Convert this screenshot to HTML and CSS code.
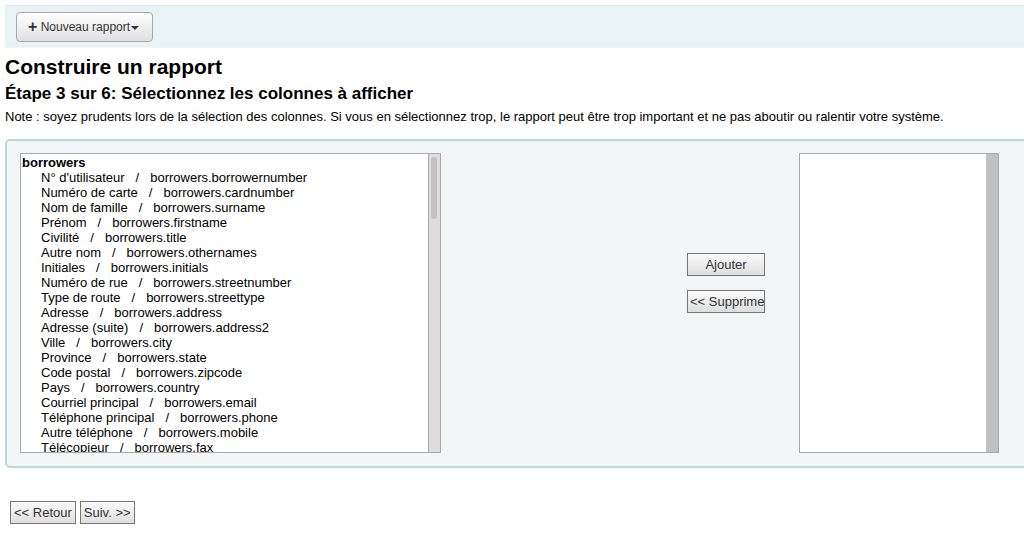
FILE: index.html
```html
<!DOCTYPE html>
<html lang="fr">
<head>
  <meta charset="UTF-8">
  <meta name="viewport" content="width=device-width, initial-scale=1.0">
  <title>Construire un rapport</title>
  <link rel="stylesheet" href="styles.css">
</head>
<body>
  <div class="page">
    <div id="toolbar">
      <button type="button" class="btn-new"><span class="plus">+</span> Nouveau rapport<span class="caret"></span></button>
    </div>

    <h1>Construire un rapport</h1>
    <h3>Étape 3 sur 6: Sélectionnez les colonnes à afficher</h3>
    <p class="note">Note : soyez prudents lors de la sélection des colonnes. Si vous en sélectionnez trop, le rapport peut être trop important et ne pas aboutir ou ralentir votre système.</p>

    <fieldset class="columns">
      <div class="listbox" id="availableColumns">
        <div class="items">
          <div class="group">borrowers</div>
          <div class="opt">N° d'utilisateur<span class="sep">/</span>borrowers.borrowernumber</div>
          <div class="opt">Numéro de carte<span class="sep">/</span>borrowers.cardnumber</div>
          <div class="opt">Nom de famille<span class="sep">/</span>borrowers.surname</div>
          <div class="opt">Prénom<span class="sep">/</span>borrowers.firstname</div>
          <div class="opt">Civilité<span class="sep">/</span>borrowers.title</div>
          <div class="opt">Autre nom<span class="sep">/</span>borrowers.othernames</div>
          <div class="opt">Initiales<span class="sep">/</span>borrowers.initials</div>
          <div class="opt">Numéro de rue<span class="sep">/</span>borrowers.streetnumber</div>
          <div class="opt">Type de route<span class="sep">/</span>borrowers.streettype</div>
          <div class="opt">Adresse<span class="sep">/</span>borrowers.address</div>
          <div class="opt">Adresse (suite)<span class="sep">/</span>borrowers.address2</div>
          <div class="opt">Ville<span class="sep">/</span>borrowers.city</div>
          <div class="opt">Province<span class="sep">/</span>borrowers.state</div>
          <div class="opt">Code postal<span class="sep">/</span>borrowers.zipcode</div>
          <div class="opt">Pays<span class="sep">/</span>borrowers.country</div>
          <div class="opt">Courriel principal<span class="sep">/</span>borrowers.email</div>
          <div class="opt">Téléphone principal<span class="sep">/</span>borrowers.phone</div>
          <div class="opt">Autre téléphone<span class="sep">/</span>borrowers.mobile</div>
          <div class="opt">Télécopieur<span class="sep">/</span>borrowers.fax</div>
        </div>
        <div class="scrollbar"><div class="thumb"></div></div>
      </div>

      <div class="actions">
        <button type="button" class="btn">Ajouter</button>
        <button type="button" class="btn">&lt;&lt; Supprimer</button>
      </div>

      <div class="listbox selected" id="selectedColumns">
        <div class="items"></div>
        <div class="scrollbar"></div>
      </div>
    </fieldset>

    <div class="nav">
      <button type="button" class="btn small">&lt;&lt; Retour</button>
      <button type="button" class="btn small">Suiv. &gt;&gt;</button>
    </div>
  </div>
</body>
</html>
```

FILE: styles.css
```css
body {
  margin: 0;
  font-family: "Liberation Sans", Arial, sans-serif;
  font-size: 13px;
  color: #000;
  background-color: #fff;
  overflow: hidden;
}

.page {
  padding: 5px 0 0 5px;
}

#toolbar {
  background-color: #e9f2f4;
  border-top: 1px solid #dfe8ea;
  border-bottom: 1px solid #f0f5f6;
  padding: 6px 0 0 11px;
  box-sizing: border-box;
  height: 43px;
}

.btn-new {
  height: 30px;
  width: 137px;
  padding: 0 0 0 11px;
  text-align: left;
  font-family: "Liberation Sans", Arial, sans-serif;
  font-size: 12px;
  color: #333;
  border: 1px solid #a9a9a9;
  border-radius: 4px;
  background: linear-gradient(#ffffff, #e0e0e0);
}

.plus {
  font-weight: bold;
  font-size: 16px;
  line-height: 12px;
  vertical-align: -1px;
}

.caret {
  display: inline-block;
  width: 0;
  height: 0;
  margin-left: 1px;
  vertical-align: middle;
  border-top: 4px solid #333;
  border-left: 4px solid transparent;
  border-right: 4px solid transparent;
}

h1 {
  font-size: 21px;
  line-height: 24px;
  margin: 7px 0 0 0;
}

h3 {
  font-size: 17px;
  line-height: 20px;
  margin: 5px 0 0 0;
}

.note {
  margin: 5px 0 0 0;
  line-height: 16px;
}

.columns {
  display: flex;
  align-items: flex-start;
  margin: 14px -30px 0 0;
  padding: 12px 13px 13px 13px;
  border: 2px solid #b9d8d9;
  border-radius: 5px;
  background-color: #f3f6f7;
}

.listbox {
  display: flex;
  height: 298px;
  background-color: #fff;
  border: 1px solid #a9a9a9;
}

#availableColumns {
  width: 419px;
}

.items {
  flex: 1;
  overflow: hidden;
  padding-top: 1px;
  line-height: 15px;
}

.scrollbar {
  width: 12px;
  border-left: 1px solid #a9a9a9;
  background-color: #dedcdc;
  padding: 3px 3px 0 2px;
  box-sizing: border-box;
}

.thumb {
  height: 62px;
  border-radius: 3px;
  background-color: #c3c1c1;
}

.group {
  font-weight: bold;
  padding-left: 1px;
  white-space: nowrap;
}

.opt {
  padding-left: 20px;
  white-space: nowrap;
}

.sep {
  padding: 0 11px;
}

.actions {
  display: flex;
  flex-direction: column;
  gap: 14px;
  margin: 100px 0 0 246px;
}

.btn {
  width: 78px;
  height: 23px;
  padding: 0 2px;
  font-family: "Liberation Sans", Arial, sans-serif;
  font-size: 13px;
  color: #333;
  border: 1px solid #767676;
  border-radius: 0;
  background: linear-gradient(#fbfbfb, #dedede);
  white-space: nowrap;
  overflow: hidden;
  text-align: center;
}

.actions .btn:last-child {
  text-align: left;
}

.selected {
  width: 198px;
  margin-left: 34px;
}

.selected .scrollbar {
  border-left: none;
  background-color: #c1c1c1;
}

.nav {
  margin: 33px 0 0 5px;
  display: flex;
  gap: 4px;
}

.btn.small {
  width: auto;
  padding: 0 3px;
}
```
